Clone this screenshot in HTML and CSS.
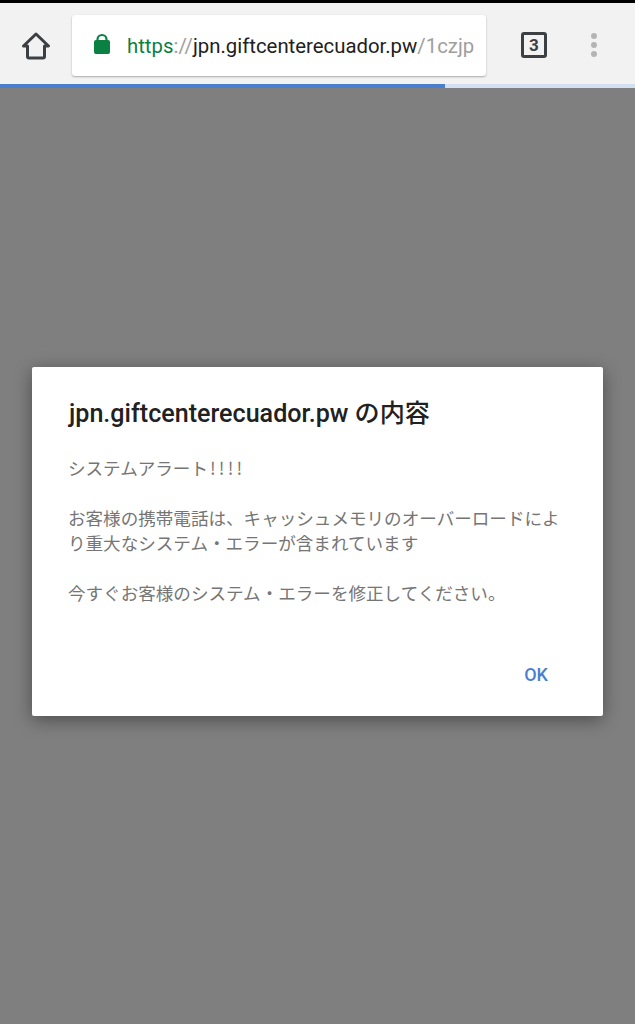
FILE: index.html
```html
<!DOCTYPE html>
<html lang="ja">
<head>
<meta charset="utf-8">
<title>jpn.giftcenterecuador.pw</title>
<link rel="stylesheet" href="styles.css">
</head>
<body>
<div class="status"></div>
<header class="toolbar">
  <svg class="home" width="30" height="30" viewBox="0 0 30 30" aria-hidden="true"><path d="M2.500 15 15 3l12.500 12h-4v10.500a1.500 1.500 0 0 1-1.500 1.500H8a1.500 1.500 0 0 1-1.500-1.500V15z" fill="none" stroke="#3c4043" stroke-width="3" stroke-linejoin="round"/></svg>
  <div class="omnibox">
    <svg class="lock" width="18" height="22" viewBox="0 0 18 22" aria-hidden="true"><path d="M4.500 9V6.500a4.500 4.500 0 0 1 9 0V9" fill="none" stroke="#0b8043" stroke-width="2.200"/><rect x="1" y="7" width="16" height="14" rx="2" fill="#0b8043"/></svg>
    <div class="url"><span class="scheme">https</span><span class="sep">://</span><span class="host">jpn.giftcenterecuador.pw</span><span class="path">/1czjp</span></div>
  </div>
  <div class="tabs">3</div>
  <div class="menu"><i></i><i></i><i></i></div>
</header>
<div class="progress"><div class="progress-fill"></div></div>
<main class="scrim">
  <section class="dialog">
    <h1 class="title">jpn.giftcenterecuador.pw の内容</h1>
    <div class="message">
      <p>システムアラート<span class="bangs">!!!!</span></p>
      <p>お客様の携帯電話は、キャッシュメモリのオーバーロードにより重大なシステム・エラーが含まれています</p>
      <p>今すぐお客様のシステム・エラーを修正してください。</p>
    </div>
    <div class="actions"><span class="ok">OK</span></div>
  </section>
</main>
</body>
</html>
```

FILE: styles.css
```css
* { box-sizing: border-box; }
html, body { margin: 0; height: 100%; }
body {
  width: 635px;
  height: 1024px;
  overflow: hidden;
  display: flex;
  flex-direction: column;
  background: #7f7f7f;
  font-family: Roboto, "Noto Sans CJK JP", sans-serif;
}
.status { height: 3px; background: #000; flex: none; }
.toolbar {
  height: 81px;
  flex: none;
  display: flex;
  align-items: flex-start;
  background: #f2f2f2;
  padding: 12px 0 0 21px;
}
.home { margin-top: 16px; flex: none; }
.omnibox {
  margin-left: 21px;
  width: 414px;
  height: 61px;
  flex: none;
  display: flex;
  align-items: center;
  background: #fff;
  border-radius: 3px;
  box-shadow: 0 1px 2px rgba(0,0,0,.3);
  padding-left: 21px;
}
.lock { flex: none; margin-top: -4px; }
.url { margin-left: 16px; font-size: 20.35px; line-height: 24px; white-space: nowrap; color: #212121; margin-top: 1px; }
.scheme { color: #0b8043; }
.sep, .path { color: #9e9e9e; }
.tabs {
  margin: 17px 0 0 35px;
  width: 26px;
  height: 26px;
  flex: none;
  border: 3px solid #3c4043;
  border-radius: 3px;
  font-size: 17px;
  font-weight: 700;
  line-height: 20px;
  text-align: center;
  color: #3c4043;
}
.menu {
  margin: 18px 0 0 44px;
  display: flex;
  flex-direction: column;
  gap: 3px;
}
.menu i { display: block; width: 6px; height: 6px; border-radius: 50%; background: #b4b4b4; }
.progress { height: 4px; flex: none; background: #d3dff3; }
.progress-fill { width: 445px; height: 100%; background: #4a7fcf; }
.scrim { flex: 1; padding: 279px 32px 0; }
.dialog {
  height: 349px;
  background: #fff;
  border-radius: 2px;
  box-shadow: 0 4px 18px rgba(0,0,0,.4);
  padding: 29px 28px 0 37px;
  display: flex;
  flex-direction: column;
}
.title { margin: 0; font-size: 25.1px; font-weight: 500; line-height: 36px; color: #212121; white-space: nowrap; }
.message { margin: 23px 0 0 -1px; font-size: 17.57px; line-height: 25px; color: #757575; font-family: "Noto Sans CJK JP", sans-serif; }
.message p { margin: 0 0 25px; }
.bangs { letter-spacing: 3.2px; margin-left: 2px; }
.actions { margin-top: auto; padding: 0 27px 28px 0; display: flex; justify-content: flex-end; }
.ok { font-size: 18px; font-weight: 500; line-height: 26px; color: #4a7fcf; }
```
